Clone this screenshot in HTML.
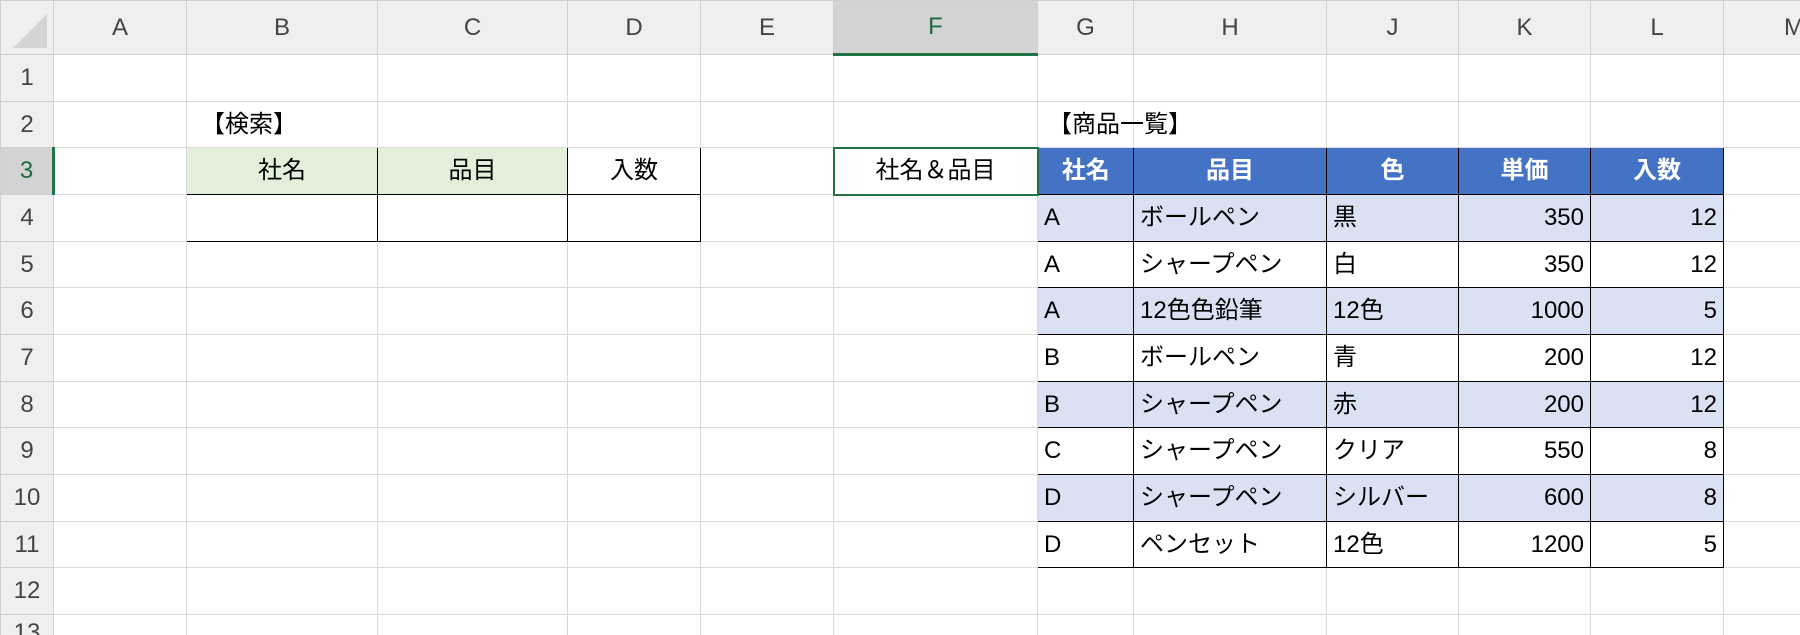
<!DOCTYPE html>
<html><head><meta charset="utf-8"><style>
html,body{margin:0;padding:0;background:#fff;width:1800px;height:635px;overflow:hidden}
table{border-collapse:collapse;table-layout:fixed;width:1800px;font-family:"Liberation Sans","Noto Sans CJK JP",sans-serif;font-size:24px;color:#000}
td{border:1px solid #dadada;padding:0 6px;white-space:nowrap;overflow:hidden;height:46px;box-sizing:border-box;line-height:1}
tr.h td{background:#efefef;color:#444;text-align:center;height:54px;border-color:#d0d0d0;font-size:24px}
td.rn{background:#efefef;color:#444;text-align:center;border-color:#d0d0d0;padding:0;font-size:24px}
td.sel{background:#d3d3d3!important;color:#1e6b3e!important}
tr.h td.sel{border-bottom:3px solid #217346}
td.rn.sel{border-right:3px solid #217346}
.k{border:1.5px solid #000}
.g{background:#e2efda;text-align:center}
.w{text-align:center}
.bh{background:#4472c4;color:#fff;font-weight:bold;text-align:center}
.b{background:#d9e1f2}
.r{text-align:right}
.c{text-align:center}
.f{border:2px solid #217346;text-align:center}
</style></head><body>
<table>
<colgroup><col style="width:53px"><col style="width:133px"><col style="width:191px"><col style="width:190px"><col style="width:133px"><col style="width:133px"><col style="width:204px"><col style="width:96px"><col style="width:193px"><col style="width:132px"><col style="width:132px"><col style="width:133px"><col style="width:77px"></colgroup>
<tr class="h"><td style="position:relative"><svg width="40" height="40" style="position:absolute;right:4px;bottom:4px"><polygon points="38,4 38,38 4,38" fill="#d4d4d4"/></svg></td><td>A</td><td>B</td><td>C</td><td>D</td><td>E</td><td class="sel">F</td><td>G</td><td>H</td><td>J</td><td>K</td><td>L</td><td style="text-align:left;padding-left:60px">M</td></tr>
<tr style="height:47px"><td class="rn">1</td><td></td><td></td><td></td><td></td><td></td><td></td><td></td><td></td><td></td><td></td><td></td><td></td></tr>
<tr style="height:46px"><td class="rn">2</td><td></td><td style="padding-left:14px">【検索】</td><td></td><td></td><td></td><td></td><td style="overflow:visible;padding-left:10px">【商品一覧】</td><td></td><td></td><td></td><td></td><td></td></tr>
<tr style="height:47px"><td class="rn sel">3</td><td></td><td class="k g">社名</td><td class="k g">品目</td><td class="k w">入数</td><td></td><td class="f">社名＆品目</td><td class="k bh">社名</td><td class="k bh">品目</td><td class="k bh">色</td><td class="k bh">単価</td><td class="k bh">入数</td><td></td></tr>
<tr style="height:47px"><td class="rn">4</td><td></td><td class="k"></td><td class="k"></td><td class="k"></td><td></td><td></td><td class="k b">A</td><td class="k b">ボールペン</td><td class="k b">黒</td><td class="k b r">350</td><td class="k b r">12</td><td></td></tr>
<tr style="height:46px"><td class="rn">5</td><td></td><td></td><td></td><td></td><td></td><td></td><td class="k">A</td><td class="k">シャープペン</td><td class="k">白</td><td class="k r">350</td><td class="k r">12</td><td></td></tr>
<tr style="height:47px"><td class="rn">6</td><td></td><td></td><td></td><td></td><td></td><td></td><td class="k b">A</td><td class="k b">12色色鉛筆</td><td class="k b">12色</td><td class="k b r">1000</td><td class="k b r">5</td><td></td></tr>
<tr style="height:47px"><td class="rn">7</td><td></td><td></td><td></td><td></td><td></td><td></td><td class="k">B</td><td class="k">ボールペン</td><td class="k">青</td><td class="k r">200</td><td class="k r">12</td><td></td></tr>
<tr style="height:46px"><td class="rn">8</td><td></td><td></td><td></td><td></td><td></td><td></td><td class="k b">B</td><td class="k b">シャープペン</td><td class="k b">赤</td><td class="k b r">200</td><td class="k b r">12</td><td></td></tr>
<tr style="height:47px"><td class="rn">9</td><td></td><td></td><td></td><td></td><td></td><td></td><td class="k">C</td><td class="k">シャープペン</td><td class="k">クリア</td><td class="k r">550</td><td class="k r">8</td><td></td></tr>
<tr style="height:47px"><td class="rn">10</td><td></td><td></td><td></td><td></td><td></td><td></td><td class="k b">D</td><td class="k b">シャープペン</td><td class="k b">シルバー</td><td class="k b r">600</td><td class="k b r">8</td><td></td></tr>
<tr style="height:46px"><td class="rn">11</td><td></td><td></td><td></td><td></td><td></td><td></td><td class="k">D</td><td class="k">ペンセット</td><td class="k">12色</td><td class="k r">1200</td><td class="k r">5</td><td></td></tr>
<tr style="height:47px"><td class="rn">12</td><td></td><td></td><td></td><td></td><td></td><td></td><td></td><td></td><td></td><td></td><td></td><td></td></tr>
<tr style="height:47px"><td class="rn" style="vertical-align:top;padding-top:6px">13</td><td></td><td></td><td></td><td></td><td></td><td></td><td></td><td></td><td></td><td></td><td></td><td></td></tr>
</table>
</body></html>
